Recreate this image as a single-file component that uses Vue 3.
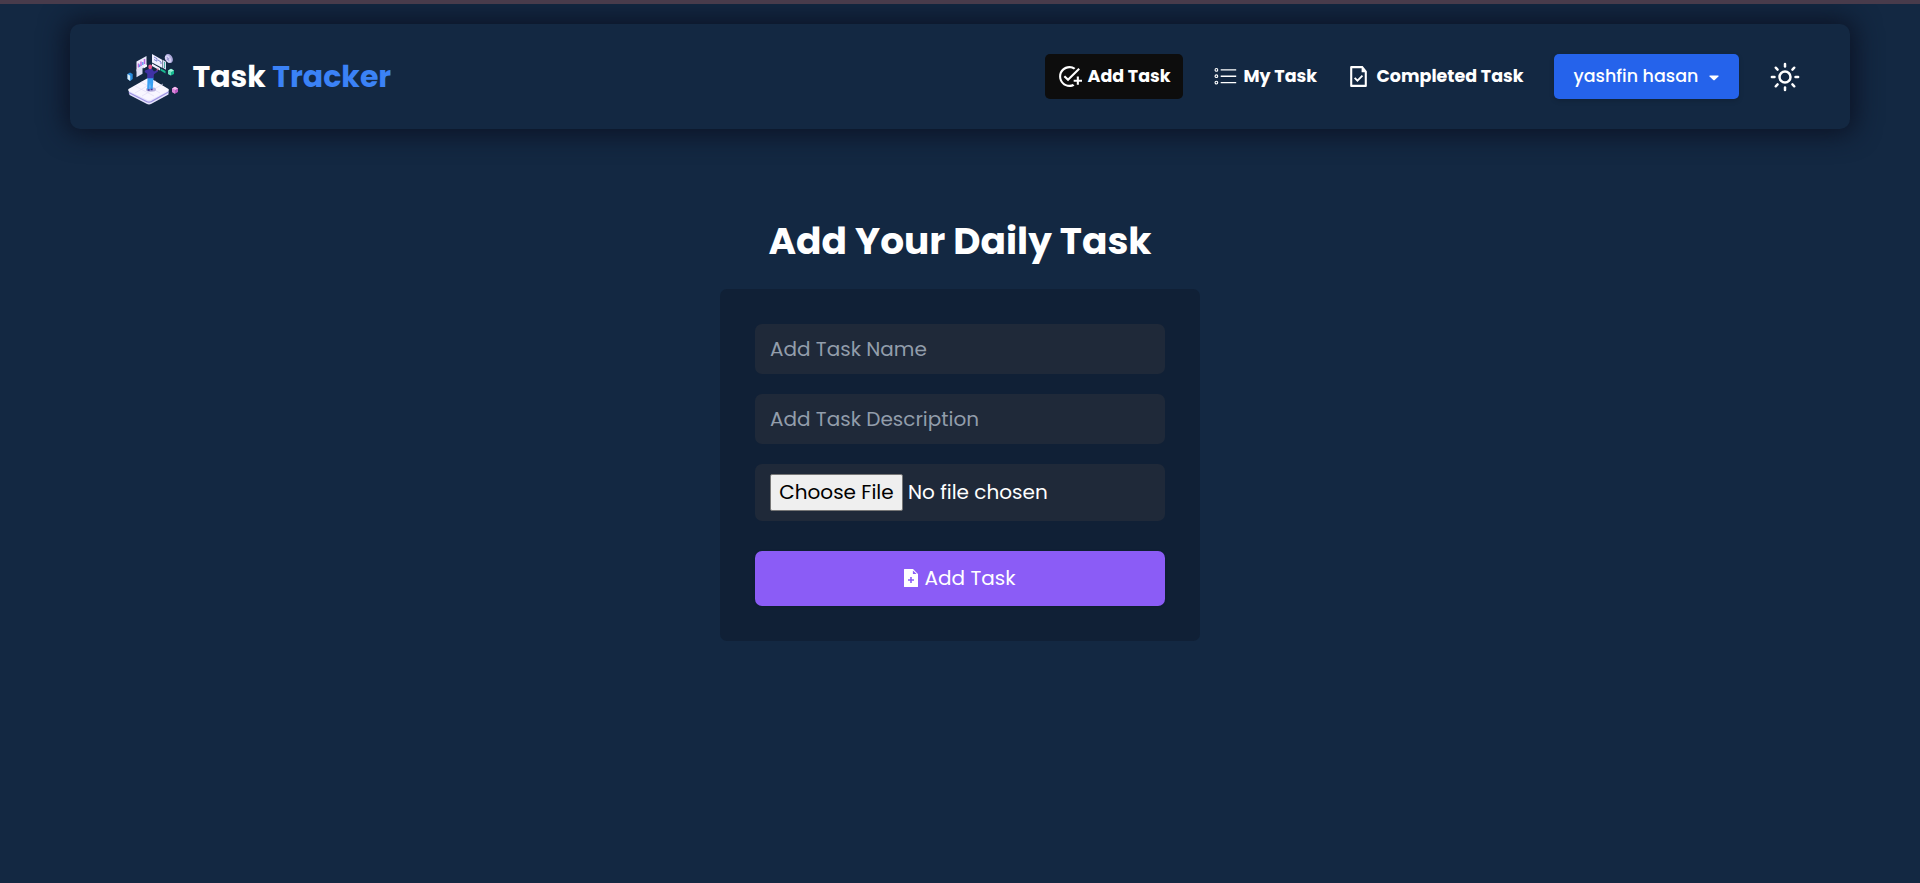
<script setup>
import { ref } from 'vue'
const name = ref('')
const description = ref('')
const rays = [0, 45, 90, 135, 180, 225, 270, 315]
</script>

<template>
  <div class="page">
    <header class="navbar">
      <a class="brand">
        <svg class="logo" viewBox="0 0 51 51">
          <path d="M1.5 36 20 25.3q2-1.2 4 0L41.5 36v4.500L24.500 49.800q-2.500 1.200-5 0L2.500 41Z" fill="#e4e2fb" />
          <path d="M1.800 38.500 19.500 47.500q2.500 1.400 5 0L41.500 38" fill="none" stroke="#9c91e2" stroke-width="1.200" />
          <path d="M1.500 35 20 24.500q2-1.200 4 0L41.500 35q1 1-.5 2L24.500 45.500q-2.500 1.400-5 0L2 37q-1.500-1-.5-2Z" fill="#f8f6ff" />
          <path d="m8 32 19 10M14 28l19 11M8 39l21-12M15 42l21-12" stroke="#e3def7" stroke-width=".7" />
          <ellipse cx="24" cy="35.500" rx="5" ry="2.200" fill="#b9b2de" />
          <path d="m9.500 7.500 10-5.500v10l-10 5.500Z" fill="#eceafd" />
          <path d="M11.500 13.500V9.500M14 12V7.500M17.500 10V5" stroke="#bd68da" stroke-width="1.500" />
          <path d="M12.700 13V10.500M15.800 11V8" stroke="#4e91ef" stroke-width="1.200" />
          <path d="m9.500 15.500 6-3.200v7.500l-6 3.400Z" fill="#dedff5" />
          <path d="m16.500 12.500 3.500-2v2l-3.500 2Z" fill="#fff" />
          <path d="m25 0 10.500 6v8L25 8.500Z" fill="#efeefe" />
          <path d="m27 3 3 1.700v2.500L27 5.500M31 6l3 2v2" stroke="#7e83cf" stroke-width="1" fill="none" />
          <path d="m25 9.500 8 4.500v2.500L25 12Z" fill="#f4f2ff" />
          <path d="m36 6 3 1.700v8L36 14Z" fill="#d9ddf2" />
          <path d="M37.500 8v6" stroke="#48b0a0" stroke-width="1" />
          <ellipse cx="42" cy="4.500" rx="3.500" ry="4.800" transform="rotate(-30 42 4.500)" fill="#aca8da" />
          <ellipse cx="41" cy="5" rx="2.700" ry="4" transform="rotate(-30 41 5)" fill="#d5d2f4" />
          <path d="m40 3 2 4m-2.500-1 3-2" stroke="#8c85c8" stroke-width=".8" />
          <path d="m33.500 14.500 5 2.500v2.500l-5-3Z" fill="#19b891" />
          <path d="m41 16.500 3-1.800 3 1.800v3.500L44 21.500 41 20Z" fill="#17b991" />
          <path d="m41 16.500 3-1.800 3 1.800-3 1.500Z" fill="#a2f2da" />
          <path d="m41 16.500 3 1.500v3.500L41 20Z" fill="#70dfbe" />
          <path d="m.5 20 2.500-1.600 2.700 1.600v5L3.200 27 .5 25Z" fill="#288cde" />
          <path d="m.5 20 2.700 1.700V27L.5 25Z" fill="#d9edfa" />
          <path d="m45 34.500 3-1.800 3 1.800v3.500L48 39.800 45 38Z" fill="#bb5ac2" />
          <path d="m45 34.500 3-1.800 3 1.800-3 1.500Z" fill="#f5c0ef" />
          <path d="m45 34.500 3 1.500v3.800L45 38Z" fill="#dc87d9" />
          <path d="M20.500 23.500h6l-.8 11.500-2.300.5-.4-7-.5 7.500-2.300-.5Z" fill="#39a0f4" />
          <path d="M20.700 35.300h2v1.500h-2ZM23.600 34.800h2v1.500h-2Z" fill="#443497" />
          <path d="m18 16.500 4-1.500h3l2 2.500 3.300-1.500.7 1.500-4 2.700-.5 4h-6.300v-4.500L17.700 18Z" fill="#4032a5" />
          <path d="m29.800 16.500 1.400-2" stroke="#dc6394" stroke-width="1.200" />
          <ellipse cx="23.200" cy="12.900" rx="1.900" ry="2.300" fill="#e5568c" />
        </svg>
        <span class="brand-name">Task <span class="accent">Tracker</span></span>
      </a>

      <nav class="menu">
        <a class="item active">
          <svg class="icon" viewBox="0 0 24 24">
            <path fill="currentColor" d="M22 5.180 10.590 16.600l-4.240-4.240 1.410-1.410 2.830 2.830 10-10L22 5.180zM12 20c-4.410 0-8-3.590-8-8s3.590-8 8-8c1.570 0 3.040.46 4.280 1.250l1.450-1.450A10.020 10.020 0 0 0 12 2C6.480 2 2 6.480 2 12s4.480 10 10 10c1.730 0 3.360-.44 4.780-1.220l-1.500-1.500c-1 .46-2.110.72-3.280.72zm7-5h-3v2h3v3h2v-3h3v-2h-3v-3h-2v3z" />
          </svg>
          <span>Add Task</span>
        </a>
        <a class="item my">
          <svg class="icon" viewBox="0 0 25 25" fill="none" stroke="currentColor">
            <g stroke-width="1.100">
              <circle cx="3.400" cy="5.900" r="1.350" /><circle cx="3.400" cy="12.200" r="1.350" /><circle cx="3.400" cy="18.600" r="1.350" />
            </g>
            <path d="M7.700 5.900h15.500M7.700 12.200h15.500M7.700 18.600h15.500" stroke-width="1.400" />
          </svg>
          <span>My Task</span>
        </a>
        <a class="item completed">
          <svg class="icon" viewBox="0 0 24 24">
            <path fill="currentColor" fill-rule="evenodd" d="M5 2h11l4 5v14a1 1 0 0 1-1 1H5a1 1 0 0 1-1-1V3a1 1 0 0 1 1-1Zm1 2v16h12V8h-3V4Z" />
            <path fill="none" stroke="currentColor" stroke-width="1.800" d="m8.300 13.300 2.700 2.700 4.800-4.800" />
          </svg>
          <span>Completed Task</span>
        </a>
        <button class="user">
          <span>yashfin hasan</span>
          <svg viewBox="0 0 10 6"><path d="M1 .4h8q1 .2.400 1L6 4.800q-1 1-2 0L.6 1.400Q0 .6 1 .4Z" fill="currentColor" /></svg>
        </button>
        <svg class="sun" viewBox="0 0 30 30" fill="none" stroke="currentColor" stroke-width="2.500">
          <circle cx="15" cy="15" r="5.500" />
          <path v-for="a in rays" :key="a" d="M15 1.900v2.600" stroke-linecap="round" :transform="`rotate(${a} 15 15)`" />
        </svg>
      </nav>
    </header>

    <main>
      <h1>Add Your Daily Task</h1>
      <form class="card" @submit.prevent>
        <input v-model="name" class="field" placeholder="Add Task Name">
        <input v-model="description" class="field" placeholder="Add Task Description">
        <div class="field file">
          <button type="button" class="choose">Choose File</button>
          <span>No file chosen</span>
        </div>
        <button class="submit">
          <svg viewBox="0 0 14 18"><path fill="currentColor" fill-rule="evenodd" d="M.5 0H9l5 5v12.500a.5.500 0 0 1-.5.500H.5a.5.500 0 0 1-.5-.5V.5A.5.500 0 0 1 .5 0ZM8.900 1.500V5h3.700ZM6.200 8v2.200H4v1.600h2.200V14h1.600v-2.200H10v-1.600H7.800V8Z" /></svg>
          <span>Add Task</span>
        </button>
      </form>
    </main>
  </div>
</template>

<style>
body { margin: 0; background: #132842; }
</style>

<style scoped>
.page, .page * { box-sizing: border-box; }
.page {
  height: 883px;
  padding-top: 20px;
  border-top: 4px solid #483b4b;
  background: #132842;
  color: #fff;
  font-family: Poppins, Inter, sans-serif;
  overflow: hidden;
}
button, input { font: inherit; color: inherit; border: 0; }
.navbar {
  display: flex;
  align-items: center;
  justify-content: space-between;
  height: 105px;
  margin: 0 70px;
  padding: 0 50px 0 56.500px;
  border-radius: 10px;
  background: #132842;
  box-shadow: 0 0 26px 5px #0c1325;
}
.brand { display: flex; align-items: center; gap: 15px; }
.logo { width: 51px; height: 51px; margin-top: 5px; }
.brand-name { font-size: 30px; font-weight: 700; }
.accent { color: #3b82f6; }
.menu { display: flex; align-items: center; font-size: 17.500px; }
.item {
  display: flex;
  align-items: center;
  gap: 6px;
  height: 45px;
  padding: 0 12.500px 0 11.500px;
  border-radius: 5px;
  font-weight: 700;
  white-space: nowrap;
}
.item span { margin-top: -1px; }
.active { width: 138px; background: #0d0d0d; }
.icon { width: 25px; height: 25px; flex: none; margin-top: -1px; }
.my { width: 129px; margin-left: 18px; }
.completed { width: 203px; margin-left: 4px; }
.user {
  display: flex;
  align-items: center;
  justify-content: space-between;
  width: 185px;
  height: 45px;
  margin-left: 17px;
  padding: 0 20px 0 19.500px;
  border-radius: 5px;
  background: #2563eb;
  font-weight: 500;
  box-shadow: 0 2px 5px rgba(0, 0, 0, .15);
}
.user span { margin-top: -1px; }
.user svg { width: 10px; height: 6px; margin-top: 3px; }
.sun { width: 30px; height: 30px; margin-left: 31px; }
main { width: 480px; margin: 84px auto 0; }
h1 {
  margin: 0 0 20px;
  font-size: 37.500px;
  font-weight: 700;
  line-height: 56px;
  text-align: center;
  white-space: nowrap;
}
.card {
  display: flex;
  flex-direction: column;
  gap: 20px;
  height: 352px;
  padding: 35px;
  border-radius: 7px;
  background: #102036;
  font-size: 20px;
}
.field {
  width: 100%;
  height: 50px;
  padding: 0 15px;
  border-radius: 7px;
  background: #1f2939;
  outline: none;
}
.field::placeholder { color: #929dab; opacity: 1; }
.file { display: flex; align-items: center; gap: 5px; height: 57px; }
.file span { margin-top: -1px; }
.choose {
  width: 133px;
  height: 37px;
  padding: 0 0 2px;
  border: 1px solid #767676;
  border-radius: 2px;
  background: #efefef;
  color: #000;
}
.submit {
  display: flex;
  align-items: center;
  justify-content: center;
  gap: 7px;
  height: 55px;
  margin-top: 10px;
  padding: 0 7px 0 6px;
  border-radius: 7px;
  background: #8b5cf6;
  box-shadow: 0 1px 3px rgba(0, 0, 0, .15);
}
.submit span { margin-top: -1px; }
.submit svg { width: 14px; height: 18px; margin-top: -1px; }
</style>
